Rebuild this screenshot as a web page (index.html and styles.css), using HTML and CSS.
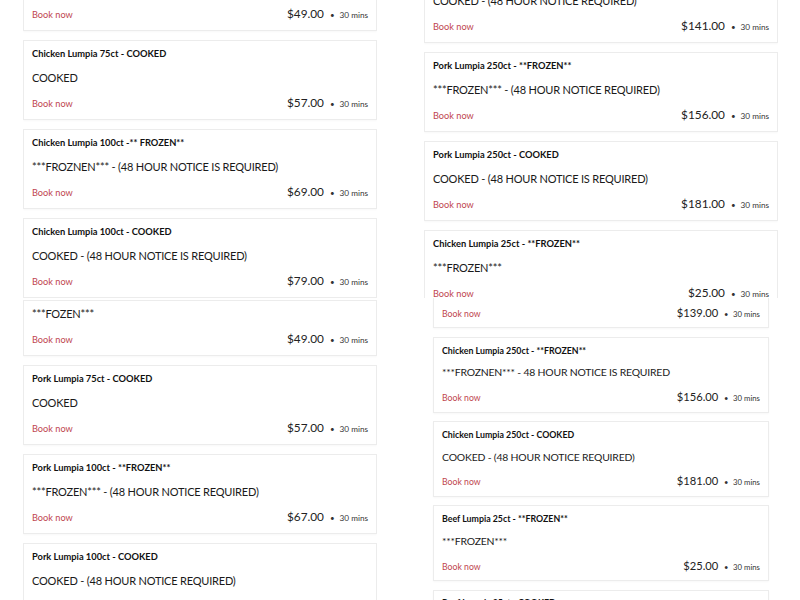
FILE: index.html
```html
<!DOCTYPE html>
<html lang="en">
<head>
<meta charset="utf-8">
<title>Lumpia services</title>
<link rel="stylesheet" href="styles.css">
</head>
<body>
<main class="page">
  <section class="column">
    <div class="pane pane-top pane-left-top">
      <article class="card">
        <h3 class="title">Chicken Lumpia 50ct - **FROZEN**</h3>
        <p class="desc">***FROZEN***</p>
        <div class="foot"><a class="book">Book now</a><span class="meta"><span class="price">$49.00</span><span class="dot">•</span><span class="dur">30 mins</span></span></div>
      </article>
      <article class="card">
        <h3 class="title">Chicken Lumpia 75ct - COOKED</h3>
        <p class="desc">COOKED</p>
        <div class="foot"><a class="book">Book now</a><span class="meta"><span class="price">$57.00</span><span class="dot">•</span><span class="dur">30 mins</span></span></div>
      </article>
      <article class="card">
        <h3 class="title">Chicken Lumpia 100ct -** FROZEN**</h3>
        <p class="desc">***FROZNEN*** - (48 HOUR NOTICE IS REQUIRED)</p>
        <div class="foot"><a class="book">Book now</a><span class="meta"><span class="price">$69.00</span><span class="dot">•</span><span class="dur">30 mins</span></span></div>
      </article>
      <article class="card">
        <h3 class="title">Chicken Lumpia 100ct - COOKED</h3>
        <p class="desc">COOKED - (48 HOUR NOTICE IS REQUIRED)</p>
        <div class="foot"><a class="book">Book now</a><span class="meta"><span class="price">$79.00</span><span class="dot">•</span><span class="dur">30 mins</span></span></div>
      </article>
    </div>
    <div class="pane pane-bottom pane-left-bottom">
      <article class="card card-cut">
        <p class="desc">***FOZEN***</p>
        <div class="foot"><a class="book">Book now</a><span class="meta"><span class="price">$49.00</span><span class="dot">•</span><span class="dur">30 mins</span></span></div>
      </article>
      <article class="card">
        <h3 class="title">Pork Lumpia 75ct - COOKED</h3>
        <p class="desc">COOKED</p>
        <div class="foot"><a class="book">Book now</a><span class="meta"><span class="price">$57.00</span><span class="dot">•</span><span class="dur">30 mins</span></span></div>
      </article>
      <article class="card">
        <h3 class="title">Pork Lumpia 100ct - **FROZEN**</h3>
        <p class="desc">***FROZEN*** - (48 HOUR NOTICE REQUIRED)</p>
        <div class="foot"><a class="book">Book now</a><span class="meta"><span class="price">$67.00</span><span class="dot">•</span><span class="dur">30 mins</span></span></div>
      </article>
      <article class="card">
        <h3 class="title">Pork Lumpia 100ct - COOKED</h3>
        <p class="desc">COOKED - (48 HOUR NOTICE REQUIRED)</p>
        <div class="foot"><a class="book">Book now</a><span class="meta"><span class="price">$77.00</span><span class="dot">•</span><span class="dur">30 mins</span></span></div>
      </article>
    </div>
  </section>

  <section class="column">
    <div class="pane pane-top pane-right-top">
      <article class="card">
        <h3 class="title">Pork Lumpia 200ct - COOKED</h3>
        <p class="desc">COOKED - (48 HOUR NOTICE REQUIRED)</p>
        <div class="foot"><a class="book">Book now</a><span class="meta"><span class="price">$141.00</span><span class="dot">•</span><span class="dur">30 mins</span></span></div>
      </article>
      <article class="card">
        <h3 class="title">Pork Lumpia 250ct - **FROZEN**</h3>
        <p class="desc">***FROZEN*** - (48 HOUR NOTICE REQUIRED)</p>
        <div class="foot"><a class="book">Book now</a><span class="meta"><span class="price">$156.00</span><span class="dot">•</span><span class="dur">30 mins</span></span></div>
      </article>
      <article class="card">
        <h3 class="title">Pork Lumpia 250ct - COOKED</h3>
        <p class="desc">COOKED - (48 HOUR NOTICE IS REQUIRED)</p>
        <div class="foot"><a class="book">Book now</a><span class="meta"><span class="price">$181.00</span><span class="dot">•</span><span class="dur">30 mins</span></span></div>
      </article>
      <article class="card">
        <h3 class="title">Chicken Lumpia 25ct - **FROZEN**</h3>
        <p class="desc">***FROZEN***</p>
        <div class="foot"><a class="book">Book now</a><span class="meta"><span class="price">$25.00</span><span class="dot">•</span><span class="dur">30 mins</span></span></div>
      </article>
    </div>
    <div class="pane pane-bottom pane-right-bottom">
      <article class="card card-foot-only">
        <div class="foot"><a class="book">Book now</a><span class="meta"><span class="price">$139.00</span><span class="dot">•</span><span class="dur">30 mins</span></span></div>
      </article>
      <article class="card">
        <h3 class="title">Chicken Lumpia 250ct - **FROZEN**</h3>
        <p class="desc">***FROZNEN*** - 48 HOUR NOTICE IS REQUIRED</p>
        <div class="foot"><a class="book">Book now</a><span class="meta"><span class="price">$156.00</span><span class="dot">•</span><span class="dur">30 mins</span></span></div>
      </article>
      <article class="card">
        <h3 class="title">Chicken Lumpia 250ct - COOKED</h3>
        <p class="desc">COOKED - (48 HOUR NOTICE REQUIRED)</p>
        <div class="foot"><a class="book">Book now</a><span class="meta"><span class="price">$181.00</span><span class="dot">•</span><span class="dur">30 mins</span></span></div>
      </article>
      <article class="card">
        <h3 class="title">Beef Lumpia 25ct - **FROZEN**</h3>
        <p class="desc">***FROZEN***</p>
        <div class="foot"><a class="book">Book now</a><span class="meta"><span class="price">$25.00</span><span class="dot">•</span><span class="dur">30 mins</span></span></div>
      </article>
      <article class="card">
        <h3 class="title">Beef Lumpia 25ct - COOKED</h3>
        <p class="desc">COOKED</p>
        <div class="foot"><a class="book">Book now</a><span class="meta"><span class="price">$35.00</span><span class="dot">•</span><span class="dur">30 mins</span></span></div>
      </article>
    </div>
  </section>
</main>
</body>
</html>
```

FILE: styles.css
```css
* { box-sizing: border-box; }

html, body {
  margin: 0;
  padding: 0;
  background: #ffffff;
}

body {
  font-family: Lato, "Noto Sans", sans-serif;
  color: #222;
  height: 600px;
  overflow: hidden;
}

.page {
  display: grid;
  grid-template-columns: 354px 354px;
  column-gap: 47px;
  padding-left: 23px;
  align-items: start;
}

.column {
  display: flex;
  flex-direction: column;
}

.pane {
  display: flex;
  flex-direction: column;
  gap: 9px;
  overflow: hidden;
}

.pane-top {
  height: 298px;
}

.pane-left-top > .card:first-child { margin-top: -49px; }
.pane-right-top > .card:first-child { margin-top: -37px; }

.pane-left-bottom { padding-top: 2px; }

.pane-right-bottom {
  zoom: 0.947;
  padding: 0 10px;
}

.card {
  flex: none;
  background: #fff;
  border: 1px solid #ececec;
  box-shadow: 0 1px 2px rgba(0, 0, 0, 0.03);
  padding: 6px 8px 8px;
}

.card-foot-only {
  border-top: none;
  padding-top: 7px;
}

.title {
  margin: 0;
  height: 14px;
  font-size: 9.3px;
  line-height: 14px;
  font-weight: 700;
  color: #111;
}

.desc {
  margin: 9px 0 0;
  height: 16px;
  font-size: 11px;
  line-height: 16px;
  letter-spacing: -0.2px;
  color: #1a1a1a;
}

.card-cut .desc { margin-top: -1px; }

.foot {
  margin-top: 9px;
  height: 16px;
  display: flex;
  justify-content: space-between;
  align-items: baseline;
  line-height: 16px;
}

.card-foot-only .foot { margin-top: 0; }

.book {
  font-size: 9.2px;
  color: #c0464f;
  text-decoration: none;
}

.meta {
  display: flex;
  align-items: baseline;
}

.price {
  font-size: 11.8px;
  color: #222;
}

.dot {
  font-size: 8px;
  color: #333;
  margin: 0 5px 0 6px;
}

.dur {
  font-size: 8.2px;
  color: #333;
}
```
